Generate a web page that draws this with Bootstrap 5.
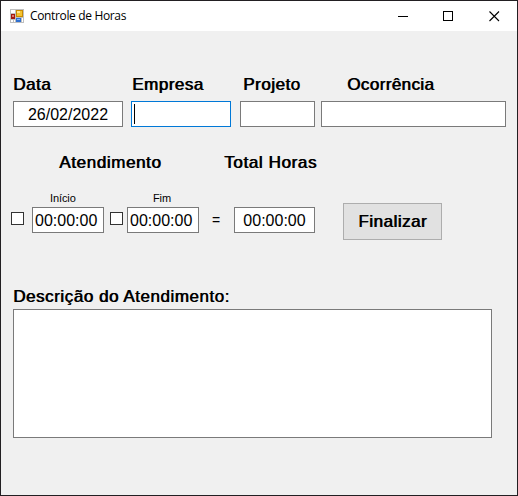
<!DOCTYPE html>
<html lang="pt-BR">
<head>
<meta charset="utf-8">
<meta name="viewport" content="width=device-width, initial-scale=1">
<title>Controle de Horas</title>
<link href="https://cdn.jsdelivr.net/npm/bootstrap@5.3.0/dist/css/bootstrap.min.css" rel="stylesheet">
<style>
  body { font-family: "Liberation Sans", Arial, sans-serif; font-size: 16px; line-height: 24px; color: #000; }
  .app-window { width: 518px; height: 496px; background: #f0f0f0; border: 1px solid #221f22; }
  .title-bar { height: 30px; padding-left: 9px; }
  .title-text { font: 12px/30px "Open Sans", "Segoe UI", sans-serif; margin-left: 6px; letter-spacing: -.35px; }
  .caption-btn { width: 45px; height: 30px; }
  .minimize, .maximize { padding-right: 2px; }
  .form-area { padding: 42px 11px 0 12px; }
  .heavy, .btn.finish { font-size: 17px; letter-spacing: .5px; text-shadow: .7px 0 0 #000; white-space: nowrap; }
  .heavy { display: block; height: 24px; }
  .form-control.box { height: 26px; padding: 0; border: 1px solid #7a7a7a; border-radius: 0; background: #fff; font-size: 16px; line-height: 26px; color: #000; }
  .form-control.active-box { border-color: #0078d7; }
  .top-fields { display: grid; grid-template-columns: 110px 100px 75px 185px; column-gap: 8px; }
  .top-fields .projeto { margin-left: 1px; width: 75px; }
  .top-fields .ocorrencia { margin-left: -1px; width: 185px; }
  .top-fields .heavy { margin-bottom: 4px; }
  .empresa .heavy { padding-left: 1px; }
  .projeto .heavy { padding-left: 3px; }
  .ocorrencia .heavy { padding-left: 26px; letter-spacing: .4px; }
  .caret-line { width: 1px; height: 20px; background: #000; margin: 2px 0 0 2px; }
  .sections { margin-top: 24px; padding-left: 46px; }
  .sections .heavy { letter-spacing: .62px; }
  .desc .heavy { letter-spacing: .54px; }
  .atendimento { width: 165px; }
  .tiny { font-size: 11px; line-height: 14px; height: 16px; letter-spacing: -.1px; display: block; padding-left: 18px; }
  .tiny.fim { padding-left: 26px; }
  .times { margin: 16px 0 0 -2px; }
  .form-check-input.tick { width: 13px; height: 13px; border: 1px solid #333; border-radius: 0; margin: 21px 0 0; background-color: #fff; }
  .form-check-input.second { margin-left: 6px; }
  .time-col { width: 72px; }
  .time-col .form-control.box { padding-left: 2px; }
  .total { width: 81px; padding-top: 16px; }
  .equals { width: 35px; font-size: 14px; padding: 17px 0 0 13px; }
  .btn.finish { width: 99px; height: 37px; padding: 0; margin: 12px 0 0 28px; background: #e1e1e1; border: 1px solid #adadad; border-radius: 0; color: #000; line-height: 35px; }
  .desc { margin-top: 45px; }
  .form-control.memo { width: 479px; height: 129px; border: 1px solid #7a7a7a; border-radius: 0; resize: none; padding: 2px; display: block; }
</style>
</head>
<body class="overflow-hidden">
<main class="app-window">
  <header class="title-bar d-flex align-items-center bg-white">
    <svg width="14" height="14" viewBox="0 0 14 14" shape-rendering="crispEdges" aria-hidden="true">
      <path fill="#bfbfbf" d="M0 0h14v14H0z"/>
      <path fill="#fff" d="M1 1h4v3H1zM1 11h2v2H1zM4 11h1v2H4zM12 9h1v4h-1z"/>
      <path fill="#a3170f" d="M1 5h4v5H1z"/><path fill="#e0786c" d="M2 6h2v2H2z"/>
      <path fill="#c88a00" d="M6 1h7v7H6z"/><path fill="#f4c22f" d="M7 2h5v5H7z"/><path fill="#ffe38a" d="M7 2h3v2H7z"/>
      <path fill="#2f6fd0" d="M6 9h5v4H6z"/><path fill="#86b6f5" d="M7 10h3v1H7z"/>
    </svg>
    <span class="title-text">Controle de Horas</span>
    <div class="d-flex ms-auto">
      <span class="caption-btn minimize d-flex align-items-center justify-content-center"><svg width="11" height="11" shape-rendering="crispEdges"><path fill="#000" d="M0 5h10v1H0z"/></svg></span>
      <span class="caption-btn maximize d-flex align-items-center justify-content-center"><svg width="11" height="11" shape-rendering="crispEdges"><path fill="none" stroke="#000" d="M.5.5h9v9h-9z"/></svg></span>
      <span class="caption-btn d-flex align-items-center justify-content-center"><svg width="11" height="11"><path fill="none" stroke="#000" stroke-width="1.1" d="M.5.5l9.5 9.5M10 .5L.5 10"/></svg></span>
    </div>
  </header>

  <form class="form-area">
    <div class="top-fields">
      <div><label class="heavy">Data</label><div class="form-control box text-center">26/02/2022</div></div>
      <div class="empresa"><label class="heavy">Empresa</label><div class="form-control box active-box"><div class="caret-line"></div></div></div>
      <div class="projeto"><label class="heavy">Projeto</label><div class="form-control box"></div></div>
      <div class="ocorrencia"><label class="heavy">Ocorrência</label><div class="form-control box"></div></div>
    </div>

    <div class="sections d-flex">
      <span class="heavy atendimento">Atendimento</span>
      <span class="heavy">Total Horas</span>
    </div>

    <div class="times d-flex">
      <input class="form-check-input tick" type="checkbox" aria-label="Início">
      <div class="time-col ms-2"><label class="tiny">Início</label><div class="form-control box">00:00:00</div></div>
      <input class="form-check-input tick second" type="checkbox" aria-label="Fim">
      <div class="time-col ms-1"><label class="tiny fim">Fim</label><div class="form-control box">00:00:00</div></div>
      <span class="equals">=</span>
      <div class="total"><div class="form-control box text-center">00:00:00</div></div>
      <button type="button" class="btn finish">Finalizar</button>
    </div>

    <div class="desc">
      <label class="heavy">Descrição do Atendimento:</label>
      <textarea class="form-control memo" aria-label="Descrição do Atendimento"></textarea>
    </div>
  </form>
</main>
<script src="https://cdn.jsdelivr.net/npm/bootstrap@5.3.0/dist/js/bootstrap.bundle.min.js"></script>
</body>
</html>
